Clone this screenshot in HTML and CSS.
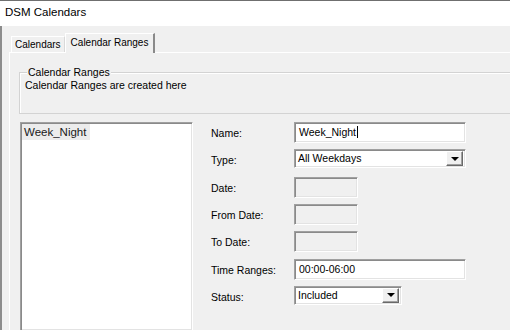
FILE: index.html
```html
<!DOCTYPE html>
<html lang="en">
<head>
  <meta charset="UTF-8">
  <title>DSM Calendars</title>
  <link rel="stylesheet" href="styles.css">
</head>
<body>
  <div class="window">
    <div class="titlebar">DSM Calendars</div>

    <div class="client">
      <div class="tabs">
        <div class="tab">Calendars</div>
        <div class="tab active">Calendar Ranges</div>
      </div>

      <div class="panel">
        <fieldset class="group">
          <legend>Calendar Ranges</legend>
          <p>Calendar Ranges are created here</p>
        </fieldset>

        <div class="main">
          <div class="listbox">
            <div class="item selected">Week_Night</div>
          </div>

          <div class="form">
            <label>Name:</label>
            <div class="field wide"><span class="caret">Week_Night</span></div>

            <label>Type:</label>
            <div class="field combo wide">
              <span>All Weekdays</span>
              <span class="drop"><i class="arrow"></i></span>
            </div>

            <label>Date:</label>
            <div class="field short"></div>

            <label>From Date:</label>
            <div class="field short"></div>

            <label>To Date:</label>
            <div class="field short"></div>

            <label>Time Ranges:</label>
            <div class="field wide">00:00-06:00</div>

            <label>Status:</label>
            <div class="field combo status">
              <span>Included</span>
              <span class="drop"><i class="arrow"></i></span>
            </div>
          </div>
        </div>
      </div>
    </div>
  </div>
</body>
</html>
```

FILE: styles.css
```css
/* Window */
* {
  margin: 0;
  padding: 0;
  box-sizing: border-box;
}

html, body {
  overflow: hidden;
}

body {
  width: 510px;
  height: 330px;
  font-family: "Liberation Sans", Arial, sans-serif;
  font-size: 10.5px;
  color: #000;
  background: #f0f0f0;
}

.window {
  height: 330px;
  display: flex;
  flex-direction: column;
  border-top: 1px solid #6f6f6f;
}

.titlebar {
  height: 25px;
  background: #fff;
  padding-left: 5px;
  font-size: 11.5px;
  line-height: 23px;
}

.client {
  flex: 1;
  display: flex;
  flex-direction: column;
  border-left: 2px solid #8c8c8c;
  padding: 7px 0 0 7px;
  overflow: hidden;
}

/* Tabs */
.tabs {
  display: flex;
  align-items: flex-end;
  height: 19px;
  padding-left: 2px;
  font-size: 10px;
}

.tab {
  height: 16px;
  padding: 0 3px;
  line-height: 16px;
  border: 1px solid;
  border-color: #fff #d9d9d9 transparent #fff;
  border-bottom: none;
}

.tab.active {
  position: relative;
  z-index: 1;
  height: 20px;
  margin-bottom: -1px;
  padding: 0 5px 0 5px;
  line-height: 18px;
  background: #f0f0f0;
  border-right: 2px solid #8a8a8a;
}

.panel {
  flex: 1;
  border-top: 1px solid #fff;
  border-left: 1px solid #fff;
  padding: 12px 0 0 9px;
}

/* Group box */
.group {
  margin-right: -10px;
  padding: 0 5px 21px;
  border: 1px solid #d3d3d3;
  box-shadow: inset 1px 1px 0 #fff;
}

.group legend {
  margin-left: 2px;
  padding: 0 1px;
  line-height: 14px;
  background: #f0f0f0;
}

.group p {
  line-height: 13px;
}

/* List + form */
.main {
  display: flex;
  gap: 18px;
  margin-top: 8px;
  padding-left: 1px;
}

.listbox,
.field {
  border: 1px solid;
  border-color: #a0a0a0 #fff #fff #a0a0a0;
  box-shadow: inset 1px 1px 0 #8a8a8a, inset -1px -1px 0 #e3e3e3;
  background: #fff;
}

.listbox {
  width: 173px;
  height: 208px;
  padding: 1px;
  border-bottom: none;
}

.item {
  display: inline-block;
  padding: 0 4px 0 2px;
  line-height: 16px;
  font-size: 11.5px;
  color: #1a1a1a;
}

.item.selected {
  background: #ececec;
}

.form {
  display: grid;
  grid-template-columns: 83px auto;
  grid-auto-rows: 21px;
  row-gap: 6.33px;
  align-items: start;
}

.form label {
  padding-top: 2px;
  line-height: 18px;
}

.field {
  height: 21px;
  padding: 2px 0 0 4px;
  line-height: 14px;
}

.field.wide {
  width: 172px;
}

.field.short {
  width: 64px;
  background: #f0f0f0;
}

.caret {
  padding-right: 1px;
  border-right: 1px solid #000;
}

.combo {
  display: flex;
  height: 19px;
  padding: 0 2px 0 3px;
  line-height: 17px;
}

.field.status {
  width: 108px;
}

.drop {
  display: flex;
  align-items: center;
  justify-content: center;
  width: 17px;
  height: 15px;
  margin: 1px 0 0 auto;
  background: #f0f0f0;
  border: 1px solid;
  border-color: #fff #696969 #696969 #fff;
  box-shadow: inset -1px -1px 0 #a0a0a0;
}

.arrow {
  width: 0;
  height: 0;
  border-left: 4px solid transparent;
  border-right: 4px solid transparent;
  border-top: 4px solid #000;
}
```
